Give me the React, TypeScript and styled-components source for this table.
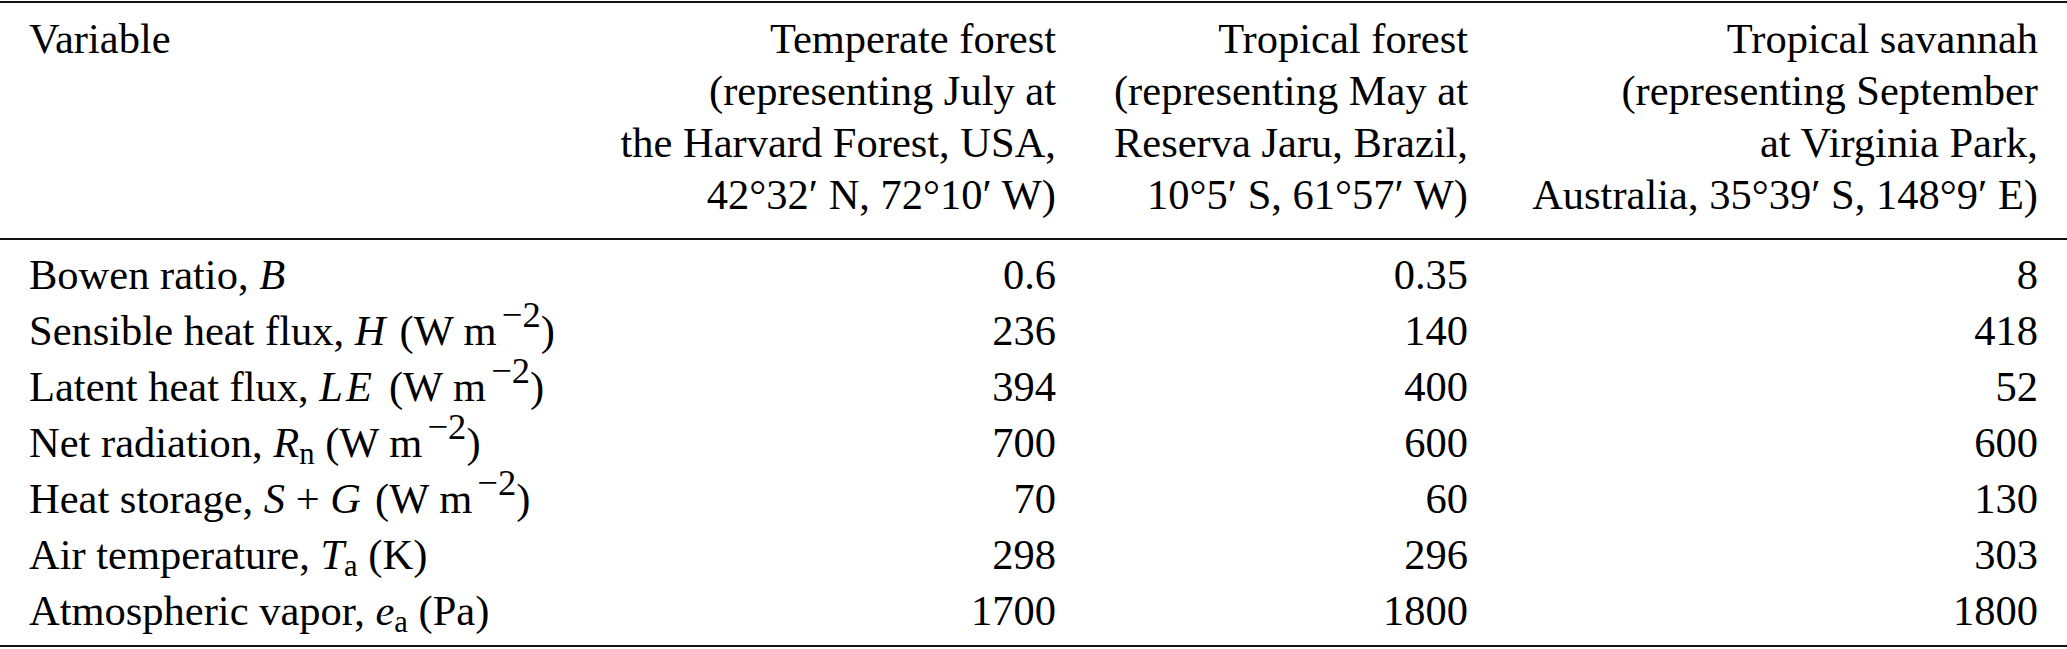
import React from "react";
import styled, { createGlobalStyle } from "styled-components";

// #region ##################################################################################### GLOBALS
const GlobalStyle = createGlobalStyle`
  html, body {
    margin: 0;
    padding: 0;
    background: #ffffff;
  }
  body {
    font-family: "Liberation Serif", "Times New Roman", serif;
    color: #000000;
    overflow: hidden;
  }
`;
// #endregion

// #region ##################################################################################### STYLES
const COLUMNS = "556px 471px 412px 570px";

const Table = styled.div`
  width: 2067px;
  margin-top: 1px;
  border-top: 2px solid #111;
  border-bottom: 2px solid #111;
  font-size: 42.5px;
`;

const Head = styled.div`
  display: grid;
  grid-template-columns: ${COLUMNS};
  padding: 10px 29px 17px;
  line-height: 52px;
  border-bottom: 2px solid #111;
`;

const Body = styled.div`
  display: grid;
  grid-template-columns: ${COLUMNS};
  padding: 7px 29px 6px;
  line-height: 56px;
`;

const Cell = styled.div<{ $align?: "left" | "right" }>`
  text-align: ${(p) => p.$align || "left"};
  white-space: nowrap;
`;

const Line = styled.div``;

// math italic, $corr adds the italic correction before a following bracket
const Var = styled.i<{ $spread?: boolean; $corr?: boolean }>`
  font-style: italic;
  letter-spacing: ${(p) => (p.$spread ? "0.07em" : "0")};
  margin-right: ${(p) => (p.$corr ? "0.08em" : "0")};
`;

const Sup = styled.span`
  position: relative;
  top: -0.5em;
  margin-left: 0.14em;
  font-size: 0.86em;
  line-height: 0;
`;

const Sub = styled.span`
  position: relative;
  top: 0.22em;
  font-size: 0.72em;
  line-height: 0;
`;
// #endregion

// #region ##################################################################################### DATA
const unit = (
  <>
    (W m<Sup>−2</Sup>)
  </>
);

const headers: string[][] = [
  ["Temperate forest", "(representing July at", "the Harvard Forest, USA,", "42°32′ N, 72°10′ W)"],
  ["Tropical forest", "(representing May at", "Reserva Jaru, Brazil,", "10°5′ S, 61°57′ W)"],
  ["Tropical savannah", "(representing September", "at Virginia Park,", "Australia, 35°39′ S, 148°9′ E)"],
];

const rows: { label: React.ReactNode; values: string[] }[] = [
  { label: <>Bowen ratio, <Var>B</Var></>, values: ["0.6", "0.35", "8"] },
  { label: <>Sensible heat flux, <Var $corr>H</Var> {unit}</>, values: ["236", "140", "418"] },
  { label: <>Latent heat flux, <Var $spread $corr>LE</Var> {unit}</>, values: ["394", "400", "52"] },
  {
    label: <>Net radiation, <Var>R</Var><Sub>n</Sub> {unit}</>,
    values: ["700", "600", "600"],
  },
  {
    label: <>Heat storage, <Var>S</Var> + <Var $corr>G</Var> {unit}</>,
    values: ["70", "60", "130"],
  },
  { label: <>Air temperature, <Var>T</Var><Sub>a</Sub> (K)</>, values: ["298", "296", "303"] },
  { label: <>Atmospheric vapor, <Var>e</Var><Sub>a</Sub> (Pa)</>, values: ["1700", "1800", "1800"] },
];
// #endregion

// #region ##################################################################################### COMPONENT
const App = () => {
  return (
    <>
      <GlobalStyle />
      <Table>
        <Head>
          <Cell>Variable</Cell>
          {headers.map((lines, i) => (
            <Cell key={i} $align="right">
              {lines.map((l, j) => (
                <Line key={j}>{l}</Line>
              ))}
            </Cell>
          ))}
        </Head>

        <Body>
          {rows.map((row, i) => (
            <React.Fragment key={i}>
              <Cell>{row.label}</Cell>
              {row.values.map((v, j) => (
                <Cell key={j} $align="right">
                  {v}
                </Cell>
              ))}
            </React.Fragment>
          ))}
        </Body>
      </Table>
    </>
  );
};
// #endregion

export default App;
